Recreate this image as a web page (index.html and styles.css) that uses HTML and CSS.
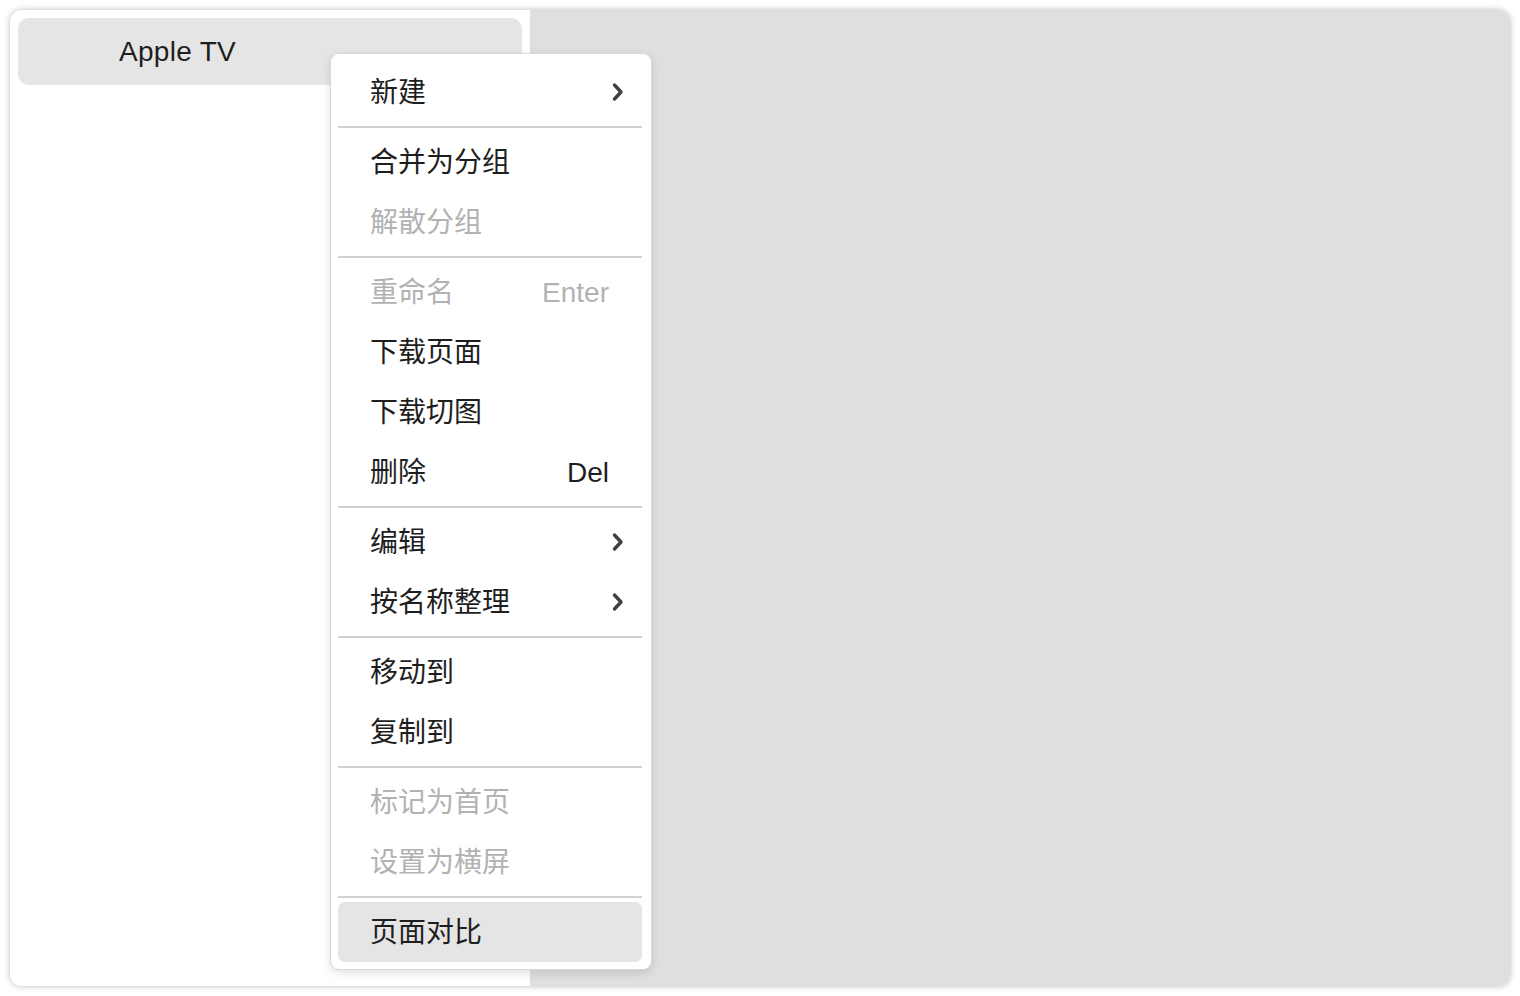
FILE: index.html
```html
<!DOCTYPE html>
<html lang="zh-CN">
  <head>
    <meta charset="UTF-8" />
    <meta name="viewport" content="width=device-width, initial-scale=1.0" />
    <title>Context Menu</title>
    <link rel="stylesheet" href="styles.css">
  </head>
  <body>
    <div class="window">
      <div class="sidebar">
        <div class="page-row">Apple TV</div>
      </div>
      <div class="canvas"></div>

      <div class="menu">
        <div class="menu-item">
          <span>新建</span>
          <svg class="chevron" width="14" height="20" viewBox="0 0 14 20"><path d="M3.5 3 L10 10 L3.5 17" /></svg>
        </div>
        <div class="menu-sep"></div>
        <div class="menu-item"><span>合并为分组</span></div>
        <div class="menu-item disabled"><span>解散分组</span></div>
        <div class="menu-sep"></div>
        <div class="menu-item disabled"><span>重命名</span><span class="key">Enter</span></div>
        <div class="menu-item"><span>下载页面</span></div>
        <div class="menu-item"><span>下载切图</span></div>
        <div class="menu-item"><span>删除</span><span class="key">Del</span></div>
        <div class="menu-sep"></div>
        <div class="menu-item">
          <span>编辑</span>
          <svg class="chevron" width="14" height="20" viewBox="0 0 14 20"><path d="M3.5 3 L10 10 L3.5 17" /></svg>
        </div>
        <div class="menu-item">
          <span>按名称整理</span>
          <svg class="chevron" width="14" height="20" viewBox="0 0 14 20"><path d="M3.5 3 L10 10 L3.5 17" /></svg>
        </div>
        <div class="menu-sep"></div>
        <div class="menu-item"><span>移动到</span></div>
        <div class="menu-item"><span>复制到</span></div>
        <div class="menu-sep"></div>
        <div class="menu-item disabled"><span>标记为首页</span></div>
        <div class="menu-item disabled"><span>设置为横屏</span></div>
        <div class="menu-sep"></div>
        <div class="menu-item active"><span>页面对比</span></div>
      </div>
    </div>
  </body>
</html>
```

FILE: styles.css
```css
body {
  margin: 0;
  background-color: #ffffff;
  font-family: "Liberation Sans", "Noto Sans CJK SC", sans-serif;
  color: #1e1e1e;
}

.window {
  position: relative;
  display: flex;
  width: 1500px;
  height: 976px;
  margin: 10px;
  border-radius: 12px;
  overflow: hidden;
  box-shadow: 0px 0px 6px rgba(0, 0, 0, 0.28);
}

.sidebar {
  width: 520px;
  padding: 8px;
  box-sizing: border-box;
  background-color: #ffffff;
}

.page-row {
  height: 67px;
  display: flex;
  align-items: center;
  padding-left: 101px;
  border-radius: 11px;
  background-color: #e5e5e5;
  font-size: 28px;
  letter-spacing: 0.3px;
}

.canvas {
  flex: 1;
  background-color: #dfdfdf;
}

.menu {
  position: absolute;
  left: 320px;
  top: 43px;
  width: 322px;
  box-sizing: border-box;
  padding: 8px 9px 7px 7px;
  background-color: #ffffff;
  border: 1px solid #d9d9d9;
  border-radius: 9px;
  box-shadow: 0px 3px 10px rgba(0, 0, 0, 0.12);
}

.menu-item {
  height: 60px;
  display: flex;
  align-items: center;
  justify-content: space-between;
  padding: 0 17px 0 32px;
  border-radius: 7px;
  font-size: 28px;
  line-height: 1;
}

.menu-item span {
  margin-top: 1px;
}

.menu-item .key {
  margin-right: 16px;
}

.menu-item.disabled {
  color: #b2b2b2;
}

.menu-item.active {
  background-color: #e5e5e5;
}

.chevron path {
  fill: none;
  stroke: #404040;
  stroke-width: 3.4;
  stroke-linecap: round;
  stroke-linejoin: round;
}

.menu-sep {
  height: 2px;
  margin: 4px 0 4px;
  background-color: #d2d2d2;
}
```
